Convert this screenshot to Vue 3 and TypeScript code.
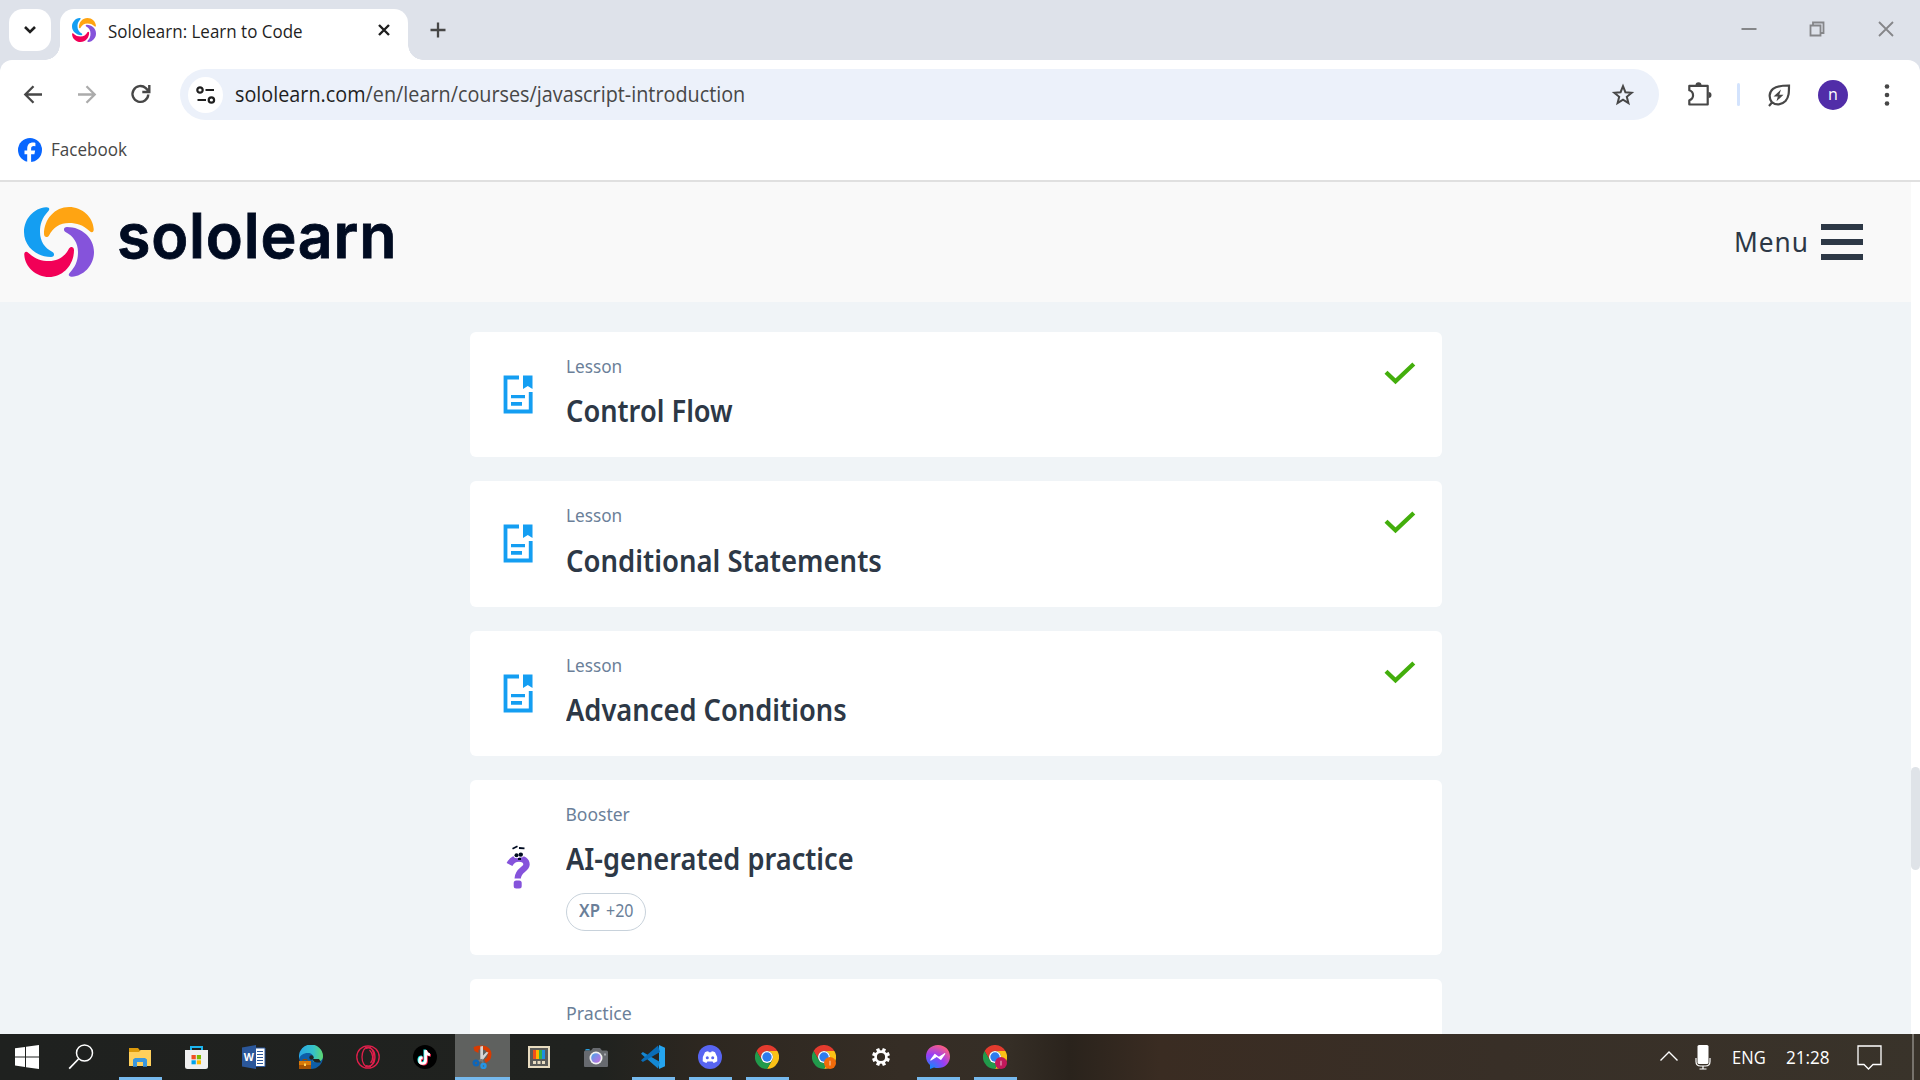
<script setup lang="ts">
interface Lesson {
  kind: string
  title: string
  titleWidth: number
  kindWidth: number
  height: number
  icon: 'doc' | 'question' | 'none'
  done?: boolean
  xp?: string
}

const lessons: Lesson[] = [
  { kind: 'Lesson', kindWidth: 56, title: 'Control Flow', titleWidth: 167, height: 125, icon: 'doc', done: true },
  { kind: 'Lesson', kindWidth: 56, title: 'Conditional Statements', titleWidth: 315.5, height: 126, icon: 'doc', done: true },
  { kind: 'Lesson', kindWidth: 56, title: 'Advanced Conditions', titleWidth: 281, height: 125, icon: 'doc', done: true },
  { kind: 'Booster', kindWidth: 64, title: 'AI-generated practice', titleWidth: 288, height: 175, icon: 'question', xp: '+20' },
  { kind: 'Practice', kindWidth: 66, title: '', titleWidth: 0, height: 125, icon: 'none' },
]

interface TaskItem {
  name: string
  state?: 'open' | 'active'
  badge?: string
}

const tasks: TaskItem[] = [
  { name: 'explorer', state: 'open' },
  { name: 'store' },
  { name: 'word' },
  { name: 'edge' },
  { name: 'opera' },
  { name: 'tiktok' },
  { name: 'snip', state: 'active' },
  { name: 'powertoys' },
  { name: 'camera' },
  { name: 'vscode', state: 'open' },
  { name: 'discord', state: 'open' },
  { name: 'chrome', state: 'open' },
  { name: 'chrome', badge: '#f26b0a' },
  { name: 'settings' },
  { name: 'messenger', state: 'open' },
  { name: 'chrome', state: 'open', badge: '#c2185b' },
]

// Scales a label horizontally so that it occupies the given width.
const vFit = {
  mounted(el: HTMLElement, binding: { value: number }) {
    if (binding.value && el.offsetWidth) {
      el.style.transform = `scaleX(${binding.value / el.offsetWidth})`
    }
  },
}
</script>

<template>
  <div class="screen">
    <div class="tabstrip">
      <button class="tab-search">
        <svg width="14" height="10" viewBox="0 0 14 10"><path d="M2 2l5 5 5-5" fill="none" stroke="#1f1f1f" stroke-width="2.6" /></svg>
      </button>
      <div class="tab">
        <svg class="favicon" width="24" height="24" viewBox="0 0 70 70">
          <path v-for="(c, i) in ['#149ef2', '#ffa412', '#8553db', '#f20057']" :key="c" :fill="c" :transform="`rotate(${i * 90} 35 35)`" d="M22 .3C10 1 0 12 0 25c0 14 12 25 27 25 3.500 0 4-3.500 1.500-5C20.500 41 16 34 16 25c0-8 2-14 8-20.500C26.500 2 25 0 22 .3z" />
        </svg>
        <span v-fit="195" class="fit tab-title">Sololearn: Learn to Code</span>
        <svg class="tab-close" width="14" height="14" viewBox="0 0 14 14"><path d="M2 2l10 10M12 2L2 12" stroke="#1f1f1f" stroke-width="2.4" /></svg>
      </div>
      <svg class="new-tab" width="16" height="16" viewBox="0 0 16 16"><path d="M8 .5v15M.5 8h15" stroke="#474747" stroke-width="2.3" /></svg>
      <div class="window-controls">
        <svg width="16" height="16" viewBox="0 0 16 16"><path d="M.5 8h15" stroke="#858689" stroke-width="2" /></svg>
        <svg width="16" height="16" viewBox="0 0 16 16" fill="none" stroke="#858689" stroke-width="1.800"><path d="M1.500 4.500h10v10h-10zM4 4V1.500h10.500V12H12" /></svg>
        <svg width="16" height="16" viewBox="0 0 16 16"><path d="M1 1l14 14M15 1L1 15" stroke="#858689" stroke-width="1.800" /></svg>
      </div>
    </div>

    <div class="chrome-body">
      <div class="toolbar">
        <svg width="54" height="54" viewBox="0 0 54 54" fill="none" stroke="#474747" stroke-width="2.300"><path d="M36 28H19.500M27.500 19.800L19.300 28l8.200 8.200" transform="translate(0 -.5)" /></svg>
        <svg width="54" height="54" viewBox="0 0 54 54" fill="none" stroke="#ababab" stroke-width="2.300"><path d="M18 28h16.500M26.500 19.800l8.200 8.200-8.200 8.200" transform="translate(0 -.5)" /></svg>
        <svg width="54" height="54" viewBox="0 0 54 54" fill="none" stroke="#474747" stroke-width="2.400"><path d="M34.800 28a7.900 7.900 0 1 1-2.500-6.300l3 3M35.800 18.500v7h-7" transform="translate(-.5 -.5)" /></svg>
        <div class="omnibox">
          <span class="site-info">
            <svg width="20" height="18" viewBox="0 0 20 18" fill="none" stroke="#1f1f1f" stroke-width="2.200"><circle cx="4" cy="4" r="2.700" /><path d="M9.500 4H18M1.500 14H10" /><circle cx="15.400" cy="14" r="2.700" /></svg>
          </span>
          <span v-fit="510" class="fit url"><b>sololearn.com</b>/en/learn/courses/javascript-introduction</span>
          <svg class="star" width="24" height="24" viewBox="0 0 24 24"><path d="M12 3.200l2.400 6 6.300.5-4.900 4.100 1.600 6.300-5.400-3.500-5.400 3.500 1.600-6.300-4.900-4.100 6.300-.5z" fill="none" stroke="#474747" stroke-width="2" /></svg>
        </div>
        <div class="actions">
          <svg class="puzzle" width="26" height="26" viewBox="0 0 26 26"><path d="M3.800 5.200h18.400v18.600H3.800v-4.300c5-1.500 5-8.500 0-10z" transform="translate(-.5 -1.300)" fill="none" stroke="#474747" stroke-width="2.200" stroke-linejoin="round" /><path d="M9.500 3.200a3 3 0 0 1 6 0zM22.500 10a3 3 0 0 1 0 6z" fill="#474747" /></svg>
          <span class="divider" />
          <svg class="leaf" width="24" height="24" viewBox="0 0 24 24"><path d="M2 23l3-3.500C1.500 15 2 9 6 5.800 9.500 3 16 2.500 22 2.500c0 7 0 11.500-3.500 15.500-3.800 4-9.500 4.500-13.300 1.300" fill="none" stroke="#474747" stroke-width="2.200" /><path d="M14 6.500l-7.500 7h4.300l-1.300 4.800 7-6.600h-4.200z" fill="#474747" /></svg>
          <span class="avatar">n</span>
          <svg class="dots" width="6" height="24" viewBox="0 0 6 24" fill="#474747"><circle cx="3" cy="3.500" r="2.300" /><circle cx="3" cy="12" r="2.300" /><circle cx="3" cy="20.500" r="2.300" /></svg>
        </div>
      </div>
      <div class="bookmarks">
        <svg width="24" height="24" viewBox="0 0 24 24"><circle cx="12" cy="12" r="12" fill="#0866ff" /><path d="M9.200 24v-7.800H6.500v-3.600h2.700v-1.700c0-4.300 2-6.300 6-6.300.8 0 1.700.1 2.200.3V8.200l-1.600-.1c-2 0-2.700.8-2.700 2.800v1.700h4l-.7 3.600h-3.300V24z" fill="#fff" /></svg>
        <span v-fit="76" class="fit">Facebook</span>
      </div>
    </div>

    <div class="viewport">
      <div class="page">
        <header class="site-header">
          <svg width="70" height="70" viewBox="0 0 70 70">
            <path v-for="(c, i) in ['#149ef2', '#ffa412', '#8553db', '#f20057']" :key="c" :fill="c" :transform="`rotate(${i * 90} 35 35)`" d="M22 .3C10 1 0 12 0 25c0 14 12 25 27 25 3.500 0 4-3.500 1.500-5C20.500 41 16 34 16 25c0-8 2-14 8-20.500C26.500 2 25 0 22 .3z" />
          </svg>
          <span v-fit="280" class="fit wordmark">sololearn</span>
          <div class="menu">
            <span class="menu-label"><span v-fit="75" class="fit">Menu</span></span>
            <span class="burger"><i /><i /><i /></span>
          </div>
        </header>
        <main class="cards">
          <article v-for="(l, i) in lessons" :key="i" class="card" :style="{ height: l.height + 'px' }">
            <div class="card-icon">
              <svg v-if="l.icon === 'doc'" width="30" height="39" viewBox="0 0 30 39">
                <path d="M16 2.500H2.500v34H27.700V17" fill="none" stroke="#149ef2" stroke-width="3.800" />
                <path d="M20 .5h9.500V14L24.800 11 20 14zM8 20h14v3.200H8zM8 27h11v3.800H8z" fill="#149ef2" />
              </svg>
              <svg v-else-if="l.icon === 'question'" width="30" height="44" viewBox="0 0 30 44">
                <path d="M6.500 19.500C8.500 15.500 12 13.500 16 13.500c4 0 7.500 2 7.500 6 0 5-8.800 5.500-8.800 14" fill="none" stroke="#8553db" stroke-width="6.400" />
                <rect x="10.700" y="35.500" width="8" height="8" rx="2.500" fill="#8553db" />
                <circle cx="13.700" cy="10" r="3.200" fill="#fff" /><circle cx="18" cy="9.300" r="3.200" fill="#fff" />
                <circle cx="13.500" cy="10.300" r="2" fill="#000b21" /><circle cx="17.800" cy="9.600" r="2.200" fill="#000b21" />
                <path d="M9.500 3.800l5-2.500M16 3l5.500.4M15 14h3" fill="none" stroke="#000b21" stroke-width="1.800" />
              </svg>
            </div>
            <div class="card-text">
              <div class="kind"><span v-fit="l.kindWidth" class="fit">{{ l.kind }}</span></div>
              <div v-if="l.title" class="title"><span v-fit="l.titleWidth" class="fit">{{ l.title }}</span></div>
              <div v-if="l.xp" class="pill">
                <span class="xp"><b v-fit="21" class="fit">XP</b></span>
                <span v-fit="27.5" class="fit">{{ l.xp }}</span>
              </div>
            </div>
            <svg v-if="l.done" class="check" width="32" height="24" viewBox="0 0 32 24"><path d="M2 11.200l9.500 9L29.800 3" fill="none" stroke="#43ae0c" stroke-width="4.300" /></svg>
          </article>
        </main>
      </div>
      <div class="scrollbar"><div class="thumb" /></div>
    </div>

    <footer class="taskbar">
      <div class="start">
        <svg width="24" height="24" viewBox="0 0 24 24" fill="#fff"><path d="M0 3.300l10-1.400v9.500H0zM11 1.700L24 0v11.400H11zM0 12.500h10V22L0 20.600zM11 12.500h13V24l-13-1.800z" /></svg>
      </div>
      <div class="search">
        <svg width="26" height="26" viewBox="0 0 26 26" fill="none" stroke="#fff" stroke-width="1.500"><circle cx="16.500" cy="9" r="8" /><path d="M10.500 15L1.200 24.700" stroke-width="1.700" /></svg>
      </div>
      <div v-for="(t, i) in tasks" :key="i" class="task" :class="t.state">
        <svg v-if="t.name === 'explorer'" width="24" height="24" viewBox="0 0 24 24"><path d="M1 3h9l2 2.500V8H1z" fill="#dc9a0b" /><path d="M1 7h10l1.500-2H23v16H1z" fill="#ffd05c" /><path d="M5 21.800v-7.300L7 13h10l2 1.500v7.300h-4V17H9v4.800z" fill="#3a97dd" /></svg>
        <svg v-else-if="t.name === 'store'" class="store" width="24" height="24" viewBox="0 0 24 24"><path d="M7 6V2h11v4" fill="none" stroke="#1cb5ee" stroke-width="2" /><path d="M1 5h23v16.500q0 2.500-2.500 2.500h-18Q1 24 1 21.500z" fill="#f0f0f0" /><path d="M7.500 10h4.300v4.300H7.500z" fill="#f25022" /><path d="M12.800 10h4.200v4.300h-4.200z" fill="#7fba00" /><path d="M7.500 15.300h4.300v4H7.500z" fill="#00a4ef" /><path d="M12.800 15.300h4.200v4h-4.200z" fill="#ffb900" /></svg>
        <svg v-else-if="t.name === 'word'" width="24" height="24" viewBox="0 0 24 24"><path d="M13 3h10v18.500H13z" fill="#fff" stroke="#2b579a" /><path d="M15 6.500h6M15 9.500h6M15 12.500h6M15 15.500h6M15 18.500h6" stroke="#2b579a" /><path d="M0 2.500L14 0v24L0 21.500z" fill="#2b579a" /><text x="1.800" y="16" font-family="Open Sans, sans-serif" font-size="10.500" font-weight="700" fill="#fff">W</text></svg>
        <svg v-else-if="t.name === 'edge'" width="24" height="24" viewBox="0 0 24 24">
          <defs><linearGradient id="edgeTop"><stop offset="0" stop-color="#2aa7e6" /><stop offset=".6" stop-color="#35c1c9" /><stop offset="1" stop-color="#5fd86c" /></linearGradient></defs>
          <circle cx="12" cy="12" r="12" fill="#0e5ea8" /><path d="M0 12a12 12 0 0 1 24-1c0 4-3 6-7 6-3 0-3.500-1-3-2.500C15 11 13 8 9 8c-5 0-8 2.500-9 6z" fill="url(#edgeTop)" /><path d="M14 14c-.5 3 3 4 8 3.300L20 14z" fill="#23241f" /><circle cx="12.500" cy="12.500" r="2.200" fill="#23241f" />
          <path d="M0 16h12v8H0z" fill="#d97a0a" /><path d="M0 20h12v4H0z" fill="#a65304" /><path d="M4 16v-1.500h4V16" fill="none" stroke="#8b4a08" /><path d="M5 18.500h2v2.500H5z" fill="#ffd35a" />
        </svg>
        <svg v-else-if="t.name === 'opera'" width="24" height="24" viewBox="0 0 24 24" fill="none" stroke="#e01f4b" stroke-width="1.300"><circle cx="12" cy="12" r="11.200" /><ellipse cx="12" cy="12" rx="6" ry="10" /><path d="M10 3.500c5-2 9 2 9 8.500s-4 10.500-9 8.500M13.500 5c4 3.500 4 10 1 13" /></svg>
        <svg v-else-if="t.name === 'tiktok'" width="24" height="24" viewBox="0 0 24 24"><circle cx="12" cy="12" r="12" fill="#000" /><g fill="none" stroke-width="2.700"><path d="M12.300 5v10.500a3 3 0 1 1-3-3.200M12.300 5c.2 2.800 2 4.300 4.300 4.500" stroke="#25f4ee" transform="translate(-.5 -.5)" /><path d="M12.300 5v10.500a3 3 0 1 1-3-3.200M12.300 5c.2 2.800 2 4.300 4.300 4.500" stroke="#fe2c55" transform="translate(1.200 .8)" /><path d="M12.300 5v10.500a3 3 0 1 1-3-3.200M12.300 5c.2 2.800 2 4.300 4.300 4.500" stroke="#fff" transform="translate(.3 .2)" /></g></svg>
        <svg v-else-if="t.name === 'snip'" width="24" height="24" viewBox="0 0 24 24"><path d="M6 3.200c7-2.500 13 1 12.500 7-.2 3.500-2 5-4.500 6" fill="none" stroke="#d83b01" stroke-width="3.800" /><path d="M2.500 2l5-1.500v7.500L3.500 6z" fill="#d83b01" /><path d="M9.300 1.500L12 1v14l-2.700 1zM17.500 7.500L11 16l-1.500-3 6-6z" fill="#d5d5d5" /><path d="M10.500 14l1.500 4M10 15l-4 1.800" stroke="#777" stroke-width="2" /><circle cx="5" cy="18" r="2.300" fill="none" stroke="#1066b8" stroke-width="2.400" /><circle cx="12.500" cy="21" r="2" fill="none" stroke="#2494e5" stroke-width="2.400" /></svg>
        <svg v-else-if="t.name === 'powertoys'" width="24" height="24" viewBox="0 0 24 24"><path d="M1 1h22v22H1z" fill="#e8dcc0" /><path d="M3 3h18v18H3z" fill="#5b5b58" /><path d="M6 5h3v9H6z" fill="#ef4d1c" /><path d="M9 5h3v9H9z" fill="#ffb400" /><path d="M12 5h3v9h-3z" fill="#33b24a" /><path d="M15 5h3v9h-3z" fill="#1f8fe0" /><path d="M6 16h3v3H6zM10.500 16h3v3h-3zM15 16h3v3h-3z" fill="#e8dcc0" /></svg>
        <svg v-else-if="t.name === 'camera'" width="24" height="24" viewBox="0 0 24 24">
          <defs><linearGradient id="lens" x2="1" y2="1"><stop offset="0" stop-color="#3fa9e8" /><stop offset=".5" stop-color="#8f86e8" /><stop offset="1" stop-color="#c86fd8" /></linearGradient></defs>
          <path d="M1 5.500q0-1.500 1.500-1.500H5q1 0 1 1.500z" fill="#2aa0df" /><path d="M0 7q0-1.500 1.500-1.500H7L9 3h7l2 2.500h4.500Q24 5.500 24 7v14q0 1-1 1H1q-1 0-1-1z" fill="#676a6f" /><circle cx="12" cy="13" r="6.500" fill="#f2f2f2" /><circle cx="12" cy="13" r="4.800" fill="url(#lens)" /><path d="M20 8.500h2v2h-2z" fill="#a5a8ad" />
        </svg>
        <svg v-else-if="t.name === 'vscode'" width="24" height="24" viewBox="0 0 24 24"><path d="M18 0L24 2.800v18.400L18 24z" fill="#25a5f0" /><path d="M1.800 7L0 8.700l17 14.800L19 17z" fill="#1488d4" /><path d="M1.800 17L0 15.300 17 .5 19 7z" fill="#0a6db8" /></svg>
        <svg v-else-if="t.name === 'discord'" width="24" height="24" viewBox="0 0 24 24"><circle cx="12" cy="12" r="12" fill="#5865f2" /><path d="M7 7.300q1.700-.8 3.300-1l.5 1h2.400l.5-1q1.600.2 3.300 1 2.700 4 2.300 9-1.800 1.300-3.700 1.800l-1-1.600H9.400l-1 1.600q-1.900-.5-3.700-1.800Q4.300 11.300 7 7.300z" fill="#fff" /><circle cx="9.300" cy="12.700" r="1.500" fill="#5865f2" /><circle cx="14.700" cy="12.700" r="1.500" fill="#5865f2" /></svg>
        <svg v-else-if="t.name === 'chrome'" width="24" height="24" viewBox="0 0 24 24"><path d="M12 6h10.400A12 12 0 0 0 1.600 6l5.200 9A6 6 0 0 1 12 6z" fill="#e33b2e" /><path d="M22.400 6H12a6 6 0 0 1 5.200 9L12 24A12 12 0 0 0 22.400 6z" fill="#fbc116" /><path d="M1.600 6l5.200 9a6 6 0 0 0 10.400 0L12 24A12 12 0 0 1 1.600 6z" fill="#219a4b" /><circle cx="12" cy="12" r="6" fill="#fff" /><circle cx="12" cy="12" r="4.700" fill="#2d7bee" /><g v-if="t.badge"><circle cx="18" cy="18" r="6" :fill="t.badge" /><path d="M18 15.800v4.600" stroke="#fff" stroke-opacity=".6" stroke-width="1.200" /></g></svg>
        <svg v-else-if="t.name === 'settings'" width="24" height="24" viewBox="0 0 24 24"><circle cx="12" cy="12" r="5.400" fill="none" stroke="#fff" stroke-width="2.600" /><path v-for="k in 8" :key="k" :transform="`rotate(${k * 45 + 22.5} 12 12)`" d="M10.300 3h3.400v3.400h-3.400z" fill="#fff" /></svg>
        <svg v-else width="24" height="24" viewBox="0 0 24 24">
          <defs><radialGradient id="msgr" cx=".2" cy="1" r="1.100"><stop offset="0" stop-color="#0a8bff" /><stop offset=".55" stop-color="#9a3df5" /><stop offset="1" stop-color="#ff5f7c" /></radialGradient></defs>
          <path d="M12 0C5 0 0 5 0 11.500c0 3.500 1.500 6.400 4 8.500v4l4-1.500c1.300.4 2.600.6 4 .6 7 0 12-5.100 12-11.600S19 0 12 0z" fill="url(#msgr)" /><path d="M4.800 15l4-5.500 4 3 6-3.800-4 5.600-4-3z" fill="#fff" stroke="#fff" stroke-width="1.200" stroke-linejoin="round" />
        </svg>
      </div>
      <div class="tray">
        <svg class="chevron" width="18" height="12" viewBox="0 0 18 12"><path d="M.5 10.500L9 2l8.500 8.500" fill="none" stroke="#fff" stroke-width="1.400" /></svg>
        <svg class="mic" width="16" height="25" viewBox="0 0 16 25"><rect x="2.500" y="0" width="11" height="19" rx="1.500" fill="#fff" /><path d="M1 13v3.500Q1 21 5.500 21h5q4.500 0 4.500-4.500V13M8 21v3M4.500 24h7" fill="none" stroke="#fff" stroke-width="1.200" /></svg>
        <span class="lang"><span v-fit="34" class="fit">ENG</span></span>
        <span class="clock"><span v-fit="44" class="fit">21:28</span></span>
        <svg class="notice" width="25" height="26" viewBox="0 0 25 26"><path d="M1 1h23v18.500h-8l-4.500 4.500L7 19.500H1z" fill="none" stroke="#fff" stroke-width="1.300" /></svg>
        <span class="peek" />
      </div>
    </footer>
  </div>
</template>

<style>
html,
body {
  margin: 0;
  overflow: hidden;
}
</style>

<style scoped>
.screen {
  width: 1920px;
  height: 1080px;
  display: flex;
  flex-direction: column;
  overflow: hidden;
  background: #dee2ea;
  font-family: 'Open Sans', 'Noto Sans', sans-serif;
}
svg {
  display: block;
  flex: none;
}
.fit {
  display: inline-block;
  white-space: nowrap;
  transform-origin: left center;
}
.tabstrip {
  height: 60px;
  display: flex;
  box-sizing: border-box;
  padding: 9px 11px 0 9px;
  flex: none;
}
.tab-search {
  width: 42px;
  height: 42px;
  border: 0;
  padding: 0;
  border-radius: 14px;
  background: #fff;
  display: flex;
  align-items: center;
  justify-content: center;
}
.tab {
  position: relative;
  margin-left: 9px;
  width: 348px;
  height: 51px;
  box-sizing: border-box;
  border-radius: 14px 14px 0 0;
  background: #fff;
  display: flex;
  padding: 9px 17px 0 12px;
}
.tab::before,
.tab::after {
  content: '';
  position: absolute;
  bottom: 0;
  width: 15px;
  height: 15px;
}
.tab::before {
  left: -15px;
  background: radial-gradient(circle at 0 0, transparent 14.5px, #fff 15px);
}
.tab::after {
  right: -15px;
  background: radial-gradient(circle at 100% 0, transparent 14.5px, #fff 15px);
}
.tab-title {
  margin-left: 12px;
  font-size: 17.5px;
  line-height: 26px;
  height: 26px;
  color: #1f1f1f;
}
.tab-close {
  margin: 5px 0 0 auto;
}
.new-tab {
  margin: 13px 0 0 22px;
}
.window-controls {
  margin: 12px 15.5px 0 auto;
  display: flex;
  gap: 52.500px;
}
.chrome-body {
  height: 120px;
  flex: none;
  background: #fff;
  border-radius: 12px 12px 0 0;
  border-bottom: 2px solid #e0e0e0;
}
.toolbar {
  display: flex;
  height: 60px;
  padding: 7px 0 0 6px;
  box-sizing: border-box;
}
.omnibox {
  margin: 2px 0 0 12px;
  width: 1479px;
  height: 51px;
  border-radius: 26px;
  background: #ecf1fa;
  display: flex;
  align-items: center;
  box-sizing: border-box;
  padding: 0 24px 0 8px;
  flex: none;
}
.site-info {
  width: 35px;
  height: 36px;
  border-radius: 50%;
  background: #fff;
  display: flex;
  align-items: center;
  justify-content: center;
}
.url {
  margin-left: 12px;
  font-size: 21px;
  line-height: 40px;
  margin-top: -2px;
  color: #474747;
}
.url b {
  font-weight: 400;
  color: #1f1f1f;
}
.star {
  margin-left: auto;
}
.actions {
  display: flex;
  align-items: center;
  height: 55px;
  margin-left: 27px;
}
.divider {
  width: 3px;
  height: 23px;
  border-radius: 2px;
  background: #d3e3fd;
  margin-left: 25px;
}
.leaf {
  margin-left: 27px;
}
.avatar {
  width: 30px;
  height: 30px;
  margin-left: 27px;
  border-radius: 50%;
  background: #512da8;
  color: #fff;
  font-size: 16px;
  line-height: 28px;
  text-align: center;
}
.dots {
  margin-left: 36px;
}
.bookmarks {
  display: flex;
  padding: 18px 0 0 18px;
  font-size: 17.500px;
  line-height: 24px;
  color: #474747;
}
.bookmarks .fit {
  margin: -1px 0 0 9px;
}
.viewport {
  height: 852px;
  flex: none;
  display: flex;
  overflow: hidden;
}
.page {
  width: 1911px;
  background: #f0f4f7;
}
.site-header {
  height: 120px;
  background: #f9f9f9;
  display: flex;
  box-sizing: border-box;
  padding: 25px 48px 0 24px;
}
.wordmark {
  margin-left: 22.5px;
  margin-top: -11px;
  height: 80px;
  font-family: Inter, sans-serif;
  font-weight: 600;
  font-size: 62px;
  line-height: 80px;
  letter-spacing: 0.8px;
  color: #000b21;
  -webkit-text-stroke: 0.8px #000b21;
}
.menu {
  margin-left: auto;
  display: flex;
  color: #2d3846;
  font-family: 'Noto Sans', sans-serif;
}
.menu-label {
  width: 87px;
  font-size: 28px;
  line-height: 68px;
  letter-spacing: 1px;
}
.burger {
  display: flex;
  flex-direction: column;
  gap: 9px;
  padding-top: 17px;
}
.burger i {
  width: 42px;
  height: 6px;
  background: #2d3846;
}
.cards {
  width: 972px;
  margin-left: 470px;
  padding-top: 30px;
  display: flex;
  flex-direction: column;
  gap: 24px;
}
.card {
  flex: none;
  display: flex;
  box-sizing: border-box;
  background: #fff;
  border-radius: 6px;
  padding-right: 26px;
  font-family: 'Noto Sans', sans-serif;
}
.card-icon {
  width: 95.5px;
  box-sizing: border-box;
  padding-left: 33px;
  display: flex;
  align-items: center;
}
.card-icon svg {
  margin-top: -1px;
}
.card-text {
  padding-top: 20px;
}
.kind {
  font-size: 17.500px;
  line-height: 28px;
  color: #6b7f99;
}
.title {
  margin-top: 8px;
  font-size: 30.5px;
  line-height: 44px;
  font-weight: 600;
  color: #2d3846;
}
.card:nth-child(2) .title {
  margin-top: 9px;
}
.pill {
  margin-top: 13px;
  width: 80px;
  height: 38px;
  box-sizing: border-box;
  border: 1px solid #c8d2db;
  border-radius: 19px;
  padding-left: 12px;
  display: flex;
  font-size: 17.500px;
  line-height: 33px;
  color: #6b7f99;
}
.xp {
  width: 27px;
}
.xp b {
  font-weight: 600;
}
.check {
  margin: 29px 0 0 auto;
}
.scrollbar {
  width: 9px;
  background: #fff;
}
.thumb {
  margin-top: 585px;
  height: 103px;
  border-radius: 5px;
  background: #dfe3e8;
}
.taskbar {
  height: 46px;
  flex: none;
  display: flex;
  background: linear-gradient(90deg, #1f211f 0, #20221f 600px, #2d2720 700px, #352d25 900px, #352e26 1010px, #2a231c 1070px, #3a2c22 1160px, #382f27 1500px, #39332a 1920px);
  color: #fff;
}
.start {
  padding: 11px 0 0 15px;
  width: 39px;
}
.search {
  padding: 10px 0 0 14px;
  width: 43px;
}
.task {
  width: 57px;
  box-sizing: border-box;
  display: flex;
  justify-content: center;
  padding-top: 11px;
}
.task .store {
  margin-left: -2px;
}
.task.open {
  background: linear-gradient(#76b9ed, #76b9ed) 8px bottom / 43px 3px no-repeat;
}
.task.active {
  width: 55px;
  margin: 0 0 0 2px;
  background: #5f615f;
  border-bottom: 3px solid #76b9ed;
}
.tray {
  margin-left: auto;
  display: flex;
  font-size: 17.500px;
  line-height: 46px;
}
.chevron {
  margin-top: 16px;
}
.mic {
  margin: 11px 0 0 17px;
}
.lang {
  width: 54px;
  margin-left: 21px;
}
.clock {
  width: 71px;
}
.notice {
  margin-top: 11px;
}
.peek {
  width: 2px;
  margin: 0 6px 0 30px;
  background: #77736c;
}
</style>
